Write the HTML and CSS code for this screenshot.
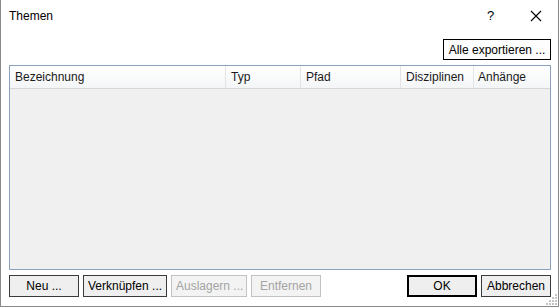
FILE: index.html
```html
<!DOCTYPE html>
<html>
<head>
  <meta charset="UTF-8">
  <title>Themen</title>
  <link rel="stylesheet" href="styles.css">
</head>
<body>
  <div class="window">
    <div class="titlebar">
      <span class="title">Themen</span>
      <span class="help">?</span>
      <span class="close">
        <svg width="12" height="12" viewBox="0 0 12 12">
          <path d="M1 1 L11 11 M11 1 L1 11" stroke="#000" stroke-width="1.1" fill="none"/>
        </svg>
      </span>
    </div>

    <div class="toolbar">
      <button class="button export">Alle exportieren ...</button>
    </div>

    <div class="list">
      <div class="list-header">
        <div class="col col-name">Bezeichnung</div>
        <div class="col col-typ">Typ</div>
        <div class="col col-pfad">Pfad</div>
        <div class="col col-disz">Disziplinen</div>
        <div class="col col-anh">Anhänge</div>
      </div>
      <div class="list-body"></div>
    </div>

    <div class="footer">
      <div class="footer-left">
        <button class="button w-neu">Neu ...</button>
        <button class="button w-verk">Verknüpfen ...</button>
        <button class="button w-ausl" disabled>Auslagern ...</button>
        <button class="button w-entf" disabled>Entfernen</button>
      </div>
      <div class="footer-right">
        <button class="button default w-ok">OK</button>
        <button class="button w-abbr">Abbrechen</button>
      </div>
    </div>

    <div class="grip">
      <svg width="12" height="12" viewBox="0 0 12 12">
        <rect x="10" y="1" width="2" height="2" fill="#c4c4c4"/>
        <rect x="7" y="4" width="2" height="2" fill="#c4c4c4"/>
        <rect x="10" y="4" width="2" height="2" fill="#c4c4c4"/>
        <rect x="4" y="7" width="2" height="2" fill="#c4c4c4"/>
        <rect x="7" y="7" width="2" height="2" fill="#c4c4c4"/>
        <rect x="10" y="7" width="2" height="2" fill="#c4c4c4"/>
        <rect x="1" y="10" width="2" height="2" fill="#c4c4c4"/>
        <rect x="4" y="10" width="2" height="2" fill="#c4c4c4"/>
        <rect x="7" y="10" width="2" height="2" fill="#c4c4c4"/>
        <rect x="10" y="10" width="2" height="2" fill="#c4c4c4"/>
      </svg>
    </div>
  </div>
</body>
</html>
```

FILE: styles.css
```css
body {
  margin: 0;
  background-color: white;
  font-family: "Liberation Sans", Arial, sans-serif;
  font-size: 12px;
  color: #000;
}

.window {
  position: relative;
  box-sizing: border-box;
  width: 559px;
  height: 307px;
  border: 1px solid #8a8a8a;
  border-top: none;
  background-color: white;
  padding: 0 7px 0 8px;
  display: flex;
  flex-direction: column;
}

.titlebar {
  height: 31px;
  display: flex;
  align-items: center;
}

.title {
  flex: 1;
  font-size: 12px;
}

.help {
  width: 12px;
  margin-right: 31px;
  font-size: 13px;
}

.close {
  display: flex;
  margin-right: 9px;
}

.toolbar {
  display: flex;
  justify-content: flex-end;
  padding-top: 8px;
  height: 21px;
  margin-bottom: 5px;
}

.button {
  box-sizing: border-box;
  height: 22px;
  padding: 0 4px;
  font-family: inherit;
  font-size: 12px;
  color: #000;
  background-color: #efefef;
  border: 1px solid #3a3a3a;
  border-radius: 0;
  white-space: nowrap;
}

.button:disabled {
  color: #a3a3a3;
  border-color: #c2c2c2;
  background-color: #f3f3f3;
}

.button.default {
  border: 2px solid #000;
}

.button.export {
  width: 108px;
  height: 21px;
  background-color: #fdfdfd;
  border-color: #000;
}

.list {
  box-sizing: border-box;
  height: 205px;
  border: 1px solid #8aa0bc;
  display: flex;
  flex-direction: column;
}

.list-header {
  display: flex;
  height: 22px;
  border-bottom: 1px solid #d6d6d6;
  background: linear-gradient(#ffffff, #f4f5f6);
}

.col {
  box-sizing: border-box;
  padding-left: 5px;
  line-height: 22px;
  border-right: 1px solid #e4e4e4;
  color: #1a1a1a;
}

.col-name { width: 216px; }
.col-typ { width: 75px; }
.col-pfad { width: 100px; }
.col-disz { width: 73px; }
.col-anh { flex: 1; padding-left: 4px; border-right: none; }

.list-body {
  flex: 1;
  background-color: #f0f0f0;
}

.footer {
  display: flex;
  justify-content: space-between;
  margin-top: 5px;
}

.footer-left,
.footer-right {
  display: flex;
  gap: 4px;
}

.w-neu { width: 70px; }
.w-verk { width: 84px; }
.w-ausl { width: 76px; }
.w-entf { width: 70px; }
.w-ok { width: 70px; }
.w-abbr { width: 70px; }

.grip {
  position: absolute;
  right: 1px;
  bottom: 1px;
  display: flex;
}
```
